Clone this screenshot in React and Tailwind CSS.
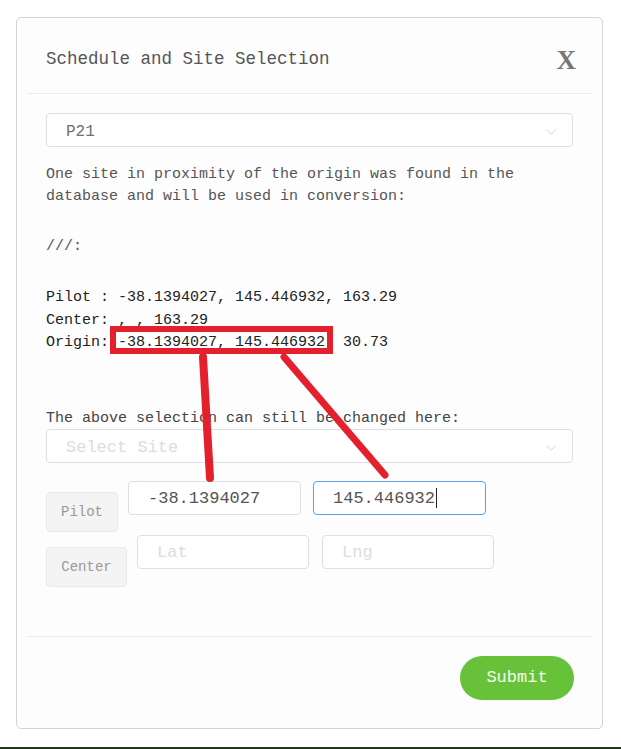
import { ChevronDown } from 'lucide-react';

const mono = "font-['Liberation_Mono',monospace]";

function SelectBox({ label, placeholder }) {
  return (
    <div className="h-[34px] border border-[#dcdfe6] rounded-[4px] bg-white flex items-center justify-between pl-[19px] pr-[12px] pt-[4px]">
      {label ? (
        <span className="text-[16px] text-[#707070]">{label}</span>
      ) : (
        <span className="text-[17px] text-[#dcdcdc]">{placeholder}</span>
      )}
      <ChevronDown size={18} strokeWidth={1} className="text-[#c0c4cc]" />
    </div>
  );
}

function CoordInput({ value, placeholder, focused, className = '' }) {
  return (
    <div className={`relative h-[34px] ${className}`}>
      <input
        readOnly
        value={value}
        placeholder={placeholder}
        className={`w-full h-full rounded-[4px] border bg-white pl-[19px] pt-[1px] text-[17px] text-[#555] placeholder:text-[#dcdcdc] outline-none ${
          focused ? 'border-[#5a9ee6]' : 'border-[#dcdfe6]'
        }`}
      />
      {focused && <span className="absolute left-[123px] top-[7px] w-[1px] h-[20px] bg-[#222]" />}
    </div>
  );
}

function PlainButton({ children, className = '' }) {
  return (
    <button
      type="button"
      className={`h-[40px] pt-[2px] rounded-[4px] border border-[#e9e9eb] bg-[#f4f4f5] text-[14px] text-[#999] ${className}`}
    >
      {children}
    </button>
  );
}

export default function App() {
  return (
    <div className={`relative w-[621px] h-[749px] bg-white overflow-hidden ${mono}`}>
      <div className="mt-[17px] ml-[16px] w-[587px] h-[712px] border border-[#d4d4d4] rounded-[5px] px-[10px] flex flex-col bg-[#fdfdfd]">
        {/* Header */}
        <div className="h-[76px] pt-[9px] pl-[19px] pr-[16px] flex items-center justify-between border-b border-[#ebebeb]">
          <h2 className="text-[17.5px] text-[#555] leading-none">Schedule and Site Selection</h2>
          <button type="button" className="font-['Liberation_Serif',serif] font-bold text-[27px] leading-none text-[#777]">
            X
          </button>
        </div>

        {/* Body */}
        <div className="px-[19px] pt-[19px] pb-[49px]">
          <SelectBox label="P21" />

          <p className="mt-[17px] text-[15px] leading-[22px] text-[#555]">
            One site in proximity of the origin was found in the database and will be used in conversion:
          </p>

          <p className="mt-[28px] text-[15px] leading-[22px] text-[#555]">///:</p>

          <div className="mt-[29px] text-[15px] leading-[22.5px] text-[#222]">
            <div>Pilot : -38.1394027, 145.446932, 163.29</div>
            <div>Center: , , 163.29</div>
            <div>Origin: -38.1394027, 145.446932, 30.73</div>
          </div>

          <p className="mt-[53px] text-[15px] leading-[22px] text-[#444]">
            The above selection can still be changed here:
          </p>
          <div className="-mt-[1px]">
            <SelectBox placeholder="Select Site" />
          </div>

          <div className="mt-[18px] flex items-start">
            <PlainButton className="mt-[11px] w-[72px]">Pilot</PlainButton>
            <CoordInput value="-38.1394027" className="ml-[10px] w-[173px]" />
            <CoordInput value="145.446932" focused className="ml-[12px] w-[173px]" />
          </div>

          <div className="mt-[3px] flex items-start">
            <PlainButton className="mt-[12px] w-[81px]">Center</PlainButton>
            <CoordInput value="" placeholder="Lat" className="ml-[10px] w-[172px]" />
            <CoordInput value="" placeholder="Lng" className="ml-[13px] w-[172px]" />
          </div>
        </div>

        {/* Footer */}
        <div className="border-t border-[#ebebeb] pt-[19px] pr-[18px] flex justify-end">
          <button
            type="button"
            className="h-[44px] w-[114px] rounded-full bg-[#67c23a] text-[17px] text-[#f4ffe8]"
          >
            Submit
          </button>
        </div>
      </div>

      <div className="mt-[18px] h-[2px] bg-[#24391a]" />

      {/* red annotation marks drawn over the screenshot */}
      <svg className="absolute left-0 top-0 pointer-events-none" width="621" height="749" viewBox="0 0 621 749">
        <rect x="113" y="329" width="217" height="22" fill="none" stroke="#e3202b" strokeWidth="6" />
        <line x1="203" y1="357" x2="210" y2="478" stroke="#e3202b" strokeWidth="8" strokeLinecap="round" />
        <line x1="284" y1="357" x2="385" y2="475" stroke="#e3202b" strokeWidth="7" strokeLinecap="round" />
      </svg>
    </div>
  );
}
